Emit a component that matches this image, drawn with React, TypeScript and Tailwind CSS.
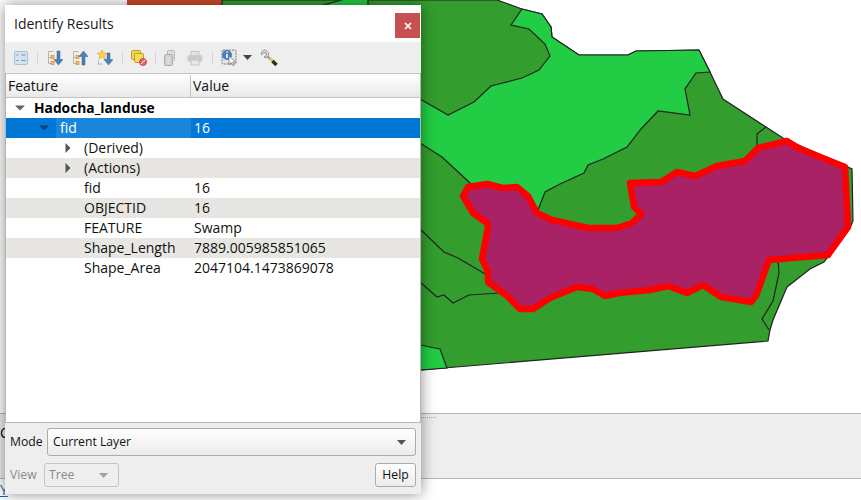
const land =
  "222,0 497,0 522,9 542,14 551,27 552,37 579,55 628,55 636,51 699,50 710,72 723,99 766,127 783,138 852,169 853,221 850,228 824,262 810,269 787,287 773,320 770,330 768,341 420,370 222,372";
const meadow =
  "522,9 542,14 551,27 552,37 579,55 628,55 636,51 699,50 710,72 696,73 685,89 690,115 658,111 641,129 627,147 603,159 588,165 584,173 560,184 545,192 538,210 520,215 475,190 470,183 442,157 420,143 400,135 400,90 420,99 448,115 474,102 491,86 522,78 539,70 550,56 545,44 529,29 511,25";
const swamp =
  "463,196 468,187 487,184 503,188 517,187 528,196 537,213 552,220 588,228 617,228 632,223 641,214 634,207 630,183 661,182 677,172 695,176 717,166 745,161 758,148 787,141 798,148 845,167 848,227 828,255 769,260 756,296 751,302 721,297 703,285 687,293 668,286 650,290 619,293 605,296 593,289 577,287 550,298 533,309 520,309 506,295 488,282 488,272 482,259 488,227 487,223 473,213";

const borders = [
  "420,229 444,252 458,258 487,275",
  "420,282 437,297 444,295 453,303 469,295 500,293",
  "778,260 779,273 773,301 762,319 769,330",
  "766,127 757,134 757,147",
];

function MapView() {
  return (
    <svg viewBox="0 0 861 413" className="block h-[413px] w-[861px]">
      <polygon points="127,0 222,0 222,6 127,6" fill="#d1492a" />
      <polygon points={land} fill="#339e2d" stroke="#222" strokeWidth="1.2" />
      <polygon points={meadow} fill="#22cc44" stroke="#222" strokeWidth="1.2" />
      <polygon points="320,6 345,-1 368,-1 368,6" fill="#22cc44" stroke="#222" strokeWidth="1.2" />
      <polygon points="420,345 440,349 447,368 420,370" fill="#22cc44" stroke="#222" strokeWidth="1.2" />
      {borders.map((b) => (
        <polyline key={b} points={b} fill="none" stroke="#222" strokeWidth="1.2" />
      ))}
      <polygon points={swamp} fill="#aa2266" stroke="#ff0000" strokeWidth="6.5" strokeLinejoin="round" />
    </svg>
  );
}

function Tri({ open, className }: { open: boolean; className: string }) {
  return (
    <svg viewBox="0 0 10 10" className={`h-[10px] w-[10px] ${className}`}>
      {open ? <path d="M0 2.5h10L5 7.5z" fill="currentColor" /> : <path d="M2.5 0v10L7.5 5z" fill="currentColor" />}
    </svg>
  );
}

function TreeIcon({ up }: { up?: boolean }) {
  return (
    <svg viewBox="0 0 16 16" className="h-4 w-4">
      <path d="M1.5 1.5h5M1.5 1.5v12M1.5 7.5h3M1.5 13.5h3" stroke="#b5b5b5" fill="none" />
      <rect x="4" y="5.5" width="3" height="3" fill="#f4b860" stroke="#e08a20" strokeWidth="0.7" />
      <rect x="4" y="11.5" width="3" height="3" fill="#f4b860" stroke="#e08a20" strokeWidth="0.7" />
      {up ? (
        <path d="M11.5 1L16 6.5h-3V15h-3V6.5H7z" fill="#4f7fb5" stroke="#32608f" strokeWidth="0.5" />
      ) : (
        <path d="M10 1h3v8.5h3L11.5 15 7 9.5h3z" fill="#4f7fb5" stroke="#32608f" strokeWidth="0.5" />
      )}
    </svg>
  );
}

function Sep() {
  return <div className="h-[12px] w-px bg-[#d4d4d4]" />;
}

function Toolbar() {
  return (
    <div className="flex h-[31px] shrink-0 items-center bg-[#eeeeee] pl-[9px]">
      <svg viewBox="0 0 14 14" className="h-[14px] w-[14px]">
        <rect x="0.5" y="0.5" width="13" height="13" rx="1.5" fill="#d4e2f0" stroke="#a9c2da" />
        <path d="M7.5 4h4M7.5 9.5h4M2.5 4h2M2.5 9.5h2" stroke="#7f8fa0" />
      </svg>
      <div className="ml-[9px]"><Sep /></div>
      <div className="ml-[9px]"><TreeIcon /></div>
      <div className="ml-[9px]"><TreeIcon up /></div>
      <div className="ml-[9px]">
        <svg viewBox="0 0 16 16" className="h-4 w-4">
          <path d="M1.5 10v5M1.5 14h4" stroke="#b5b5b5" fill="none" />
          <path d="M10 3h3v6.5h3L11.5 15 7 9.5h3z" fill="#4f7fb5" stroke="#32608f" strokeWidth="0.5" />
          <path d="M5 0l1.4 3 3.3.3-2.5 2.2.8 3.2L5 7 2 8.7l.8-3.2L.3 3.3 3.6 3z" fill="#ffd83a" stroke="#e59a1c" strokeWidth="0.6" />
        </svg>
      </div>
      <div className="ml-[9px]"><Sep /></div>
      <div className="ml-[8px]">
        <svg viewBox="0 0 16 16" className="h-4 w-4">
          <rect x="0.5" y="0.5" width="9" height="9" rx="1" fill="#f0d64c" stroke="#b8a02a" />
          <rect x="3.5" y="3.5" width="9" height="9" rx="1" fill="#f5dd5a" stroke="#b8a02a" />
          <circle cx="12" cy="12" r="3.5" fill="#e8616a" stroke="#c9303a" strokeWidth="0.7" />
          <path d="M10 14l4-4" stroke="#fff" />
        </svg>
      </div>
      <div className="ml-[8px]"><Sep /></div>
      <div className="ml-[6px]">
        <svg viewBox="0 0 16 16" className="h-4 w-4">
          <rect x="5.5" y="0.5" width="7" height="10" rx="1" fill="#dcdcdc" stroke="#b8b8b8" />
          <rect x="2.5" y="4.5" width="8" height="11" rx="1" fill="#cfcfcf" stroke="#adadad" />
          <path d="M4.5 8h4M4.5 10.5h4M4.5 13h4" stroke="#ededed" />
        </svg>
      </div>
      <div className="ml-[9px]">
        <svg viewBox="0 0 16 16" className="h-4 w-4">
          <rect x="4" y="1.5" width="8" height="4" fill="#e2e2e2" stroke="#c6c6c6" />
          <rect x="0.5" y="5" width="15" height="7" rx="2" fill="#cbcbcb" />
          <rect x="4" y="10" width="8" height="5" fill="#e8e8e8" stroke="#c6c6c6" />
        </svg>
      </div>
      <div className="ml-[9px]"><Sep /></div>
      <div className="ml-[8px]">
        <svg viewBox="0 0 17 17" className="h-[17px] w-[17px]">
          <rect x="1" y="1" width="14" height="14" rx="1" fill="#e6e6e6" stroke="#777" strokeDasharray="2 1" />
          <circle cx="6" cy="6" r="5" fill="#4a7fc0" />
          <path d="M6 2.6v1.2M6 5v4" stroke="#fff" strokeWidth="1.6" />
          <path d="M8 7l0 8.5 2.2-2 1.6 3.2 1.4-.7-1.6-3 2.8-.3z" fill="#fff" stroke="#555" strokeWidth="0.6" />
        </svg>
      </div>
      <div className="ml-[5px]">
        <svg viewBox="0 0 9 5" className="block h-[5px] w-[9px]">
          <path d="M0 0h9L4.5 5z" fill="#444" />
        </svg>
      </div>
      <div className="ml-[8px]">
        <svg viewBox="0 0 18 18" className="h-[18px] w-[18px]">
          <path d="M5.8 1.2A3.6 3.6 0 0 0 1.5 5.8L4 3.6l2 .4.4 2-2.4 2.3a3.6 3.6 0 0 0 4.6-4.2z" fill="#e4e4e4" stroke="#777" strokeWidth="0.8" />
          <path d="M7.5 7.5l3.5 3.5" stroke="#9a9a9a" strokeWidth="2.4" />
          <path d="M10 9.5l3 3" stroke="#e8c95a" strokeWidth="3.2" />
          <path d="M12.5 12l4 4" stroke="#2d2d1c" strokeWidth="3.4" />
        </svg>
      </div>
    </div>
  );
}

const attrs: { name: string; value?: string; expander?: boolean }[] = [
  { name: "(Derived)", expander: true },
  { name: "(Actions)", expander: true },
  { name: "fid", value: "16" },
  { name: "OBJECTID", value: "16" },
  { name: "FEATURE", value: "Swamp" },
  { name: "Shape_Length", value: "7889.005985851065" },
  { name: "Shape_Area", value: "2047104.1473869078" },
];

function Tree() {
  return (
    <div className="flex min-h-0 flex-1 flex-col border-x border-[#b5b5b5] bg-white text-[14px] leading-[20px] text-[#111]">
      <div className="flex h-[25px] shrink-0 border-y border-[#c4c4c4] bg-gradient-to-b from-white to-[#e9e9e9] pt-px text-[14px]">
        <div className="flex w-[185px] items-center border-r border-[#c4c4c4] pl-[2px]">Feature</div>
        <div className="flex items-center pl-[2px]">Value</div>
      </div>
      <div className="flex h-[20px] items-center pl-[9px] text-[13.8px] font-bold text-black">
        <Tri open className="text-[#666]" />
        <span className="ml-[9px]">Hadocha_landuse</span>
      </div>
      <div className="flex h-[20px] bg-[#0078d7] text-white">
        <div className="flex w-[185px] items-center">
          <Tri open className="ml-[33px] text-[#0b3f70]" />
          <div className="ml-[7px] flex h-full flex-1 items-center bg-[#1a86db] pl-[4px]">fid</div>
        </div>
        <div className="flex items-center pl-[3px]">16</div>
      </div>
      {attrs.map((a, i) => (
        <div key={a.name} className={`flex h-[20px] ${i % 2 === 1 ? "bg-[#e8e6e2]" : "bg-white"}`}>
          <div className="flex w-[185px] items-center">
            <div className="flex w-[78px] justify-end pr-[11px]">
              {a.expander && <Tri open={false} className="text-[#555]" />}
            </div>
            <span>{a.name}</span>
          </div>
          <div className="flex items-center pl-[3px]">{a.value}</div>
        </div>
      ))}
    </div>
  );
}

function Dialog() {
  return (
    <div className="absolute left-[5px] top-[5px] flex h-[489px] w-[416px] flex-col bg-[#eeeeee] shadow-[0_0_14px_rgba(0,0,0,0.45)]">
      <div className="flex h-[37px] shrink-0 items-start bg-white">
        <span className="mt-[9px] pl-[9px] text-[14px] leading-[20px] text-[#1a1a1a]">Identify Results</span>
        <div className="ml-auto mr-px mt-[8px] flex h-[25px] w-[25px] items-center justify-center bg-[#c75050]">
          <svg viewBox="0 0 8 8" className="h-2 w-2">
            <path d="M1 1l6 6M7 1L1 7" stroke="#fff" strokeWidth="1.7" />
          </svg>
        </div>
      </div>
      <Toolbar />
      <Tree />
      <div className="shrink-0 border-t border-[#b5b5b5] px-[5px] pb-[7px] pt-[5px] text-[12.2px] text-[#111]">
        <div className="flex h-[28px] items-center">
          <span className="w-[37px]">Mode</span>
          <div className="flex h-[28px] flex-1 items-center justify-between rounded-[3px] border border-[#ababab] bg-gradient-to-b from-white to-[#ececec] pl-[5px] pr-[9px]">
            <span>Current Layer</span>
            <svg viewBox="0 0 9 5" className="h-[5px] w-[9px]">
              <path d="M0 0h9L4.5 5z" fill="#555" />
            </svg>
          </div>
        </div>
        <div className="mt-[7px] flex h-[24px] items-center">
          <span className="w-[34px] text-[#8a8a8a]">View</span>
          <div className="flex h-[24px] w-[75px] items-center justify-between rounded-[3px] border border-[#c4c4c4] pl-[4px] pr-[10px] text-[#8a8a8a]">
            <span>Tree</span>
            <svg viewBox="0 0 9 5" className="h-[5px] w-[9px]">
              <path d="M0 0h9L4.5 5z" fill="#a0a0a0" />
            </svg>
          </div>
          <div className="ml-auto flex h-[24px] w-[41px] items-center justify-center rounded-[3px] border border-[#ababab] bg-gradient-to-b from-white to-[#ececec]">
            Help
          </div>
        </div>
      </div>
    </div>
  );
}

export default function App() {
  return (
    <div className="relative flex h-[500px] w-[861px] flex-col overflow-hidden bg-white font-['Open_Sans',sans-serif]">
      <MapView />
      <div className="relative h-[66px] border-y border-[#b5b5b5] bg-[#eeeeee] text-[14px] text-black">
        <span className="block pt-[10px] leading-[18px]">C</span>
        <div className="absolute left-[420px] top-[3px] h-px w-[16px] border-t border-dotted border-[#aaa]" />
      </div>
      <div className="pt-[2px] text-[14px] leading-[18px] text-[#1a5fb4] underline">Y</div>
      <Dialog />
    </div>
  );
}
